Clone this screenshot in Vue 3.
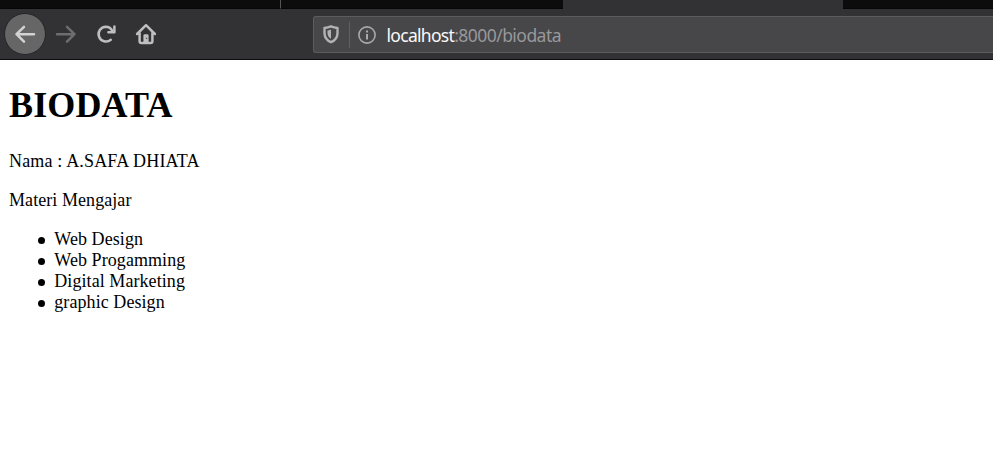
<script setup>
const subjects = ['Web Design', 'Web Progamming', 'Digital Marketing', 'graphic Design']
</script>

<template>
  <div class="window">
    <div class="tabs">
      <div class="tab first"></div>
      <div class="tab second"></div>
      <div class="tab active"></div>
      <div class="tab rest"></div>
    </div>
    <div class="toolbar">
      <div class="nav">
        <button class="back" aria-label="Back">
          <svg width="22" height="20" viewBox="0 0 22 20"><path d="M20 10.2H2.6M10 2.8 2.5 10.2 10 17.6" /></svg>
        </button>
        <svg class="forward" width="22" height="20" viewBox="0 0 22 20"><path d="M2 10.2H19.2M12 2.8 19.5 10.2 12 17.6" /></svg>
        <svg class="reload" width="20" height="20" viewBox="0 0 20 20">
          <path class="line" d="M16.6 7.4Q14.4 2.7 9.8 2.7A7.4 7.4 0 1 0 14.8 15.7" />
          <path class="line" d="M18.4 2.4V8.2H12.4" />
        </svg>
        <svg class="home" width="22" height="22" viewBox="0 0 22 22">
          <path class="line" d="M2.1 11 11 2.2 19.9 11M4.6 10V18.2Q4.6 20 6.4 20H15.6Q17.4 20 17.4 18.2V10" />
          <path class="solid" fill-rule="evenodd" d="M8.4 20V12.6Q8.4 11.2 9.8 11.2H12.2Q13.6 11.2 13.6 12.6V20ZM11.2 14.7V16H12.2V14.7Z" />
        </svg>
      </div>
      <div class="address">
        <svg class="shield" width="16" height="19" viewBox="0 0 16 19">
          <path class="line" d="M8 1.4Q11 2.7 14.5 3V8.4Q14.2 14.7 8 17.2Q1.8 14.7 1.5 8.4V3Q5 2.7 8 1.4Z" />
          <path class="solid" d="M8 4.5V13.8Q4.7 12 4.5 8.2V5.5Q6.3 5.3 8 4.5Z" />
        </svg>
        <span class="divider"></span>
        <svg class="info" width="18" height="18" viewBox="0 0 18 18">
          <circle cx="9" cy="9" r="8.1" />
          <path d="M9 8V13.4" /><path d="M9 4.4V6.4" />
        </svg>
        <span class="url"><span class="host">localhost</span><span class="path">:8000/biodata</span></span>
      </div>
    </div>
    <main class="page">
      <h1>BIODATA</h1>
      <p class="name">Nama : A.SAFA DHIATA</p>
      <p>Materi Mengajar</p>
      <ul>
        <li v-for="s in subjects" :key="s">{{ s }}</li>
      </ul>
    </main>
  </div>
</template>

<style>
body { margin: 0; background: #fff; }
</style>

<style scoped>
.window { height: 456px; overflow: hidden; background: #fff; }
.tabs { display: flex; height: 9px; background: #0c0c0d; }
.tab { box-sizing: border-box; border-bottom: 1px solid #060607; }
.first { width: 281px; border-right: 1px solid #55555a; }
.second { width: 282px; }
.active { width: 280px; background: #323234; border-bottom: 0; }
.rest { flex: 1; }
.toolbar {
  box-sizing: border-box; display: flex; align-items: flex-start; height: 51px;
  background: #323234; border-bottom: 1px solid #0c0c0d;
}
.nav { display: flex; align-items: center; width: 313px; height: 50px; }
svg { display: block; flex: none; fill: none; stroke-linecap: round; stroke-linejoin: round; }
.back {
  display: flex; align-items: center; justify-content: center; box-sizing: border-box;
  width: 42px; height: 42px; margin: 0 0 0 4px; padding: 0;
  border: 1px solid #252527; border-radius: 50%; background: #666667;
}
.back svg { stroke: #d2d2d3; stroke-width: 2.5; }
.forward { margin-left: 9px; stroke: #6d6d6f; stroke-width: 2.5; }
.reload { margin-left: 19px; }
.home { margin-left: 19px; }
.line { stroke: #bebebf; stroke-width: 2.5; }
.solid { fill: #bebebf; }
.address {
  box-sizing: border-box; display: flex; align-items: center; flex: 1; height: 37px; margin-top: 7px;
  border: 1px solid #5c5c5e; border-right: 0; border-radius: 3px 0 0 3px; background: #474749;
}
.shield { margin-left: 9px; }
.shield .line { stroke: #b2b2b4; stroke-width: 2.4; }
.shield .solid { fill: #b2b2b4; }
.divider { width: 1px; height: 26px; margin-left: 10px; background: #5b5f67; }
.info { margin-left: 8px; stroke: #a9a9ab; stroke-width: 1.6; }
.info path { stroke-width: 2; stroke-linecap: butt; }
.url {
  display: flex; margin-left: 10.5px; padding-top: 1px;
  font: 17.5px/24px "Noto Sans", sans-serif; letter-spacing: -0.7px; white-space: nowrap;
}
.host { color: #f9f9fa; }
.path { color: #98989b; letter-spacing: -0.54px; }
.page {
  display: flow-root; padding: 0 9px; color: #000;
  font: 18px/21px "Liberation Serif", serif; letter-spacing: 0.07px;
}
h1 { margin: 24px 0 25px; font-size: 36px; line-height: 42px; font-weight: 700; letter-spacing: 0.15px; }
p { margin: 0 0 18px; }
.name { letter-spacing: 0.17px; }
ul { margin: 0; padding-left: 29px; list-style: none; }
li { display: flex; align-items: center; }
li::before { content: ""; width: 7px; height: 7px; margin: 1px 9.3px 0 0; border-radius: 50%; background: #000; }
</style>
